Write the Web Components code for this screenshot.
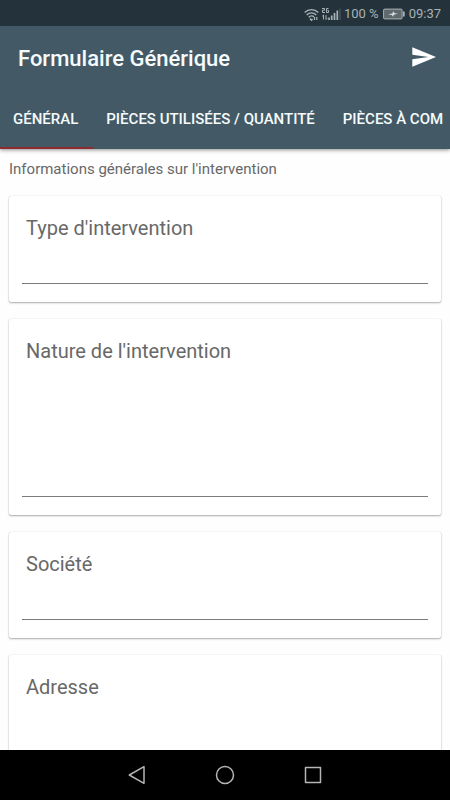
<!DOCTYPE html>
<html lang="fr">
<head>
<meta charset="utf-8">
<meta name="viewport" content="width=device-width, initial-scale=1">
<title>Formulaire Générique</title>
<style>
  html, body { margin: 0; height: 100%; }
  body { font-family: Roboto, "Liberation Sans", sans-serif; background: #fefefe; color: #686868; }
</style>
</head>
<body>
<form-screen>
  <status-bar slot="top" battery="100 %" time="09:37"></status-bar>
  <app-bar slot="top" heading="Formulaire Générique">
    <tab-item selected>GÉNÉRAL</tab-item>
    <tab-item>PIÈCES UTILISÉES / QUANTITÉ</tab-item>
    <tab-item>PIÈCES À COM</tab-item>
  </app-bar>
  <form-section heading="Informations générales sur l'intervention">
    <field-card label="Type d'intervention"></field-card>
    <field-card label="Nature de l'intervention" multiline></field-card>
    <field-card label="Société"></field-card>
    <field-card label="Adresse" multiline></field-card>
  </form-section>
  <nav-bar slot="bottom"></nav-bar>
</form-screen>

<script>
class BaseElement extends HTMLElement {
  connectedCallback() {
    if (this.shadowRoot) return;
    this.attachShadow({ mode: "open" }).innerHTML = this.render();
  }
}

customElements.define("form-screen", class extends BaseElement {
  render() {
    return `<style>
      :host { display: flex; flex-direction: column; height: 100vh; overflow: hidden; }
      header { flex: none; position: relative; z-index: 1; box-shadow: 0 1px 4px rgba(0,0,0,.45); }
      main { flex: 1; min-height: 0; overflow: hidden; }
      footer { flex: none; }
    </style>
    <header><slot name="top"></slot></header>
    <main><slot></slot></main>
    <footer><slot name="bottom"></slot></footer>`;
  }
});

customElements.define("status-bar", class extends BaseElement {
  render() {
    return `<style>
      :host { display: flex; justify-content: flex-end; align-items: center; height: 26px; padding: 2px 9px 0 0;
        box-sizing: border-box; background: #24333b; color: #a9b2b6; font-size: 13px; line-height: 24px; white-space: nowrap; }
      svg { display: block; flex: none; }
      .signal { margin: 0 3px 0 3px; }
      .battery { margin: 0 4px; }
    </style>
    <svg width="15" height="13" viewBox="0 0 15 13" fill="none" stroke="#a9b2b6" stroke-width="1.4" aria-hidden="true">
      <path d="M.7 4.5C4.500.6 10.500.6 14.300 4.500M2.700 7C5.500 4.200 9.500 4.200 12.300 7M4.700 9.300C6.300 7.700 8.700 7.700 10 9"/>
      <path d="M6 10.500 7.500 12.300 8.500 11" />
      <path d="M10.500 9v3M12.800 9v3" stroke-width="1.200"/>
    </svg>
    <svg class="signal" width="19" height="14" viewBox="0 0 19 14" fill="none" stroke="#a9b2b6" aria-hidden="true">
      <path d="M0 1.500h2.500v1.700H.5V5.500H3M6.500 1.500h-2v4h2v-2H5.500" stroke-width="1"/>
      <path d="M1.500 8v4.500M.3 9.200 1.500 8M4 8v4.500M4 12.500 5.200 11.300" stroke-width="1"/>
      <path d="M7 13v-2.500M9.700 13V8.500M12.500 13V6M15.300 13V3.500" stroke-width="1.700"/>
      <path d="M18 13V1.500" stroke="#4c5a61" stroke-width="1.200"/>
    </svg>
    <span>${this.getAttribute("battery")}</span>
    <svg class="battery" width="22" height="12" viewBox="0 0 22 12" aria-hidden="true">
      <rect x=".6" y="1.100" width="18.500" height="9.800" rx="1" fill="#5e696e" stroke="#a9b2b6"/>
      <path d="M20 3.500h1.700v5H20z" fill="#a9b2b6"/>
      <path d="M5 6.200 9.500 5.500 10 3.200 11.800 5.200 15 5.700 10.800 6.800 10 8.800 8.800 6.900z" fill="#d8dddf"/>
    </svg>
    <time>${this.getAttribute("time")}</time>`;
  }
});

customElements.define("app-bar", class extends BaseElement {
  render() {
    return `<style>
      :host { display: block; background: #435a66; color: #f5fbfc; }
      .title { display: flex; align-items: center; justify-content: space-between; height: 62px; padding: 0 14px 0 18px; }
      h1 { margin: 0; padding-top: 4px; font-size: 22px; line-height: 28px; font-weight: 500; white-space: nowrap; }
      button { display: flex; padding: 0; border: 0; background: none; color: #fff; }
      .tabs { display: flex; height: 61px; overflow: hidden; }
    </style>
    <div class="title">
      <h1>${this.getAttribute("heading")}</h1>
      <button type="button" aria-label="Envoyer">
        <svg width="24" height="20" viewBox="0 0 24 20"><path fill="currentColor" d="M.3.2 24 10 .3 19.800V12.300L16.500 10 .3 7.700z"/></svg>
      </button>
    </div>
    <div class="tabs" role="tablist"><slot></slot></div>`;
  }
});

customElements.define("tab-item", class extends BaseElement {
  render() {
    const selected = this.hasAttribute("selected");
    return `<style>
      :host { display: flex; flex: none; }
      button { font: 500 15px/20px Roboto, "Liberation Sans", sans-serif; color: inherit; background: none; border: 0;
        border-bottom: 2px solid transparent; padding: 2px 15px 0 13px; margin: 0; white-space: nowrap; }
      button[aria-selected="true"] { border-bottom-color: #8c2c30; }
    </style>
    <button type="button" role="tab" aria-selected="${selected}"><slot></slot></button>`;
  }
});

customElements.define("form-section", class extends BaseElement {
  render() {
    return `<style>
      :host { display: block; padding: 10px 9px; }
      h2 { margin: 0 0 17px; font-size: 15px; line-height: 20px; font-weight: 400; }
      form { display: grid; gap: 17px; }
    </style>
    <h2>${this.getAttribute("heading")}</h2>
    <form><slot></slot></form>`;
  }
});

customElements.define("field-card", class extends BaseElement {
  render() {
    const control = this.hasAttribute("multiline")
      ? `<textarea id="field"></textarea>`
      : `<input id="field" type="text">`;
    return `<style>
      :host { display: block; padding: 20px 13px 18px; background: #fff; border-radius: 2px;
        box-shadow: 0 1px 2px rgba(0,0,0,.32), 0 0 1px rgba(0,0,0,.2); }
      label { display: block; padding-left: 4px; font-size: 20px; line-height: 24px; }
      input, textarea { display: block; box-sizing: border-box; width: 100%; height: 44px; margin: 0; padding: 8px 4px;
        border: 0; border-bottom: 1px solid #7c7c7c; border-radius: 0; background: none; outline: 0; resize: none;
        font: 20px/24px Roboto, "Liberation Sans", sans-serif; color: #333; }
      textarea { height: 134px; }
    </style>
    <label for="field">${this.getAttribute("label")}</label>
    ${control}`;
  }
});

customElements.define("nav-bar", class extends BaseElement {
  render() {
    return `<style>
      :host { display: block; background: #000; }
      nav { display: flex; justify-content: center; align-items: center; gap: 68px; height: 50px; }
      button { display: flex; padding: 0; border: 0; background: none; color: #b5b5b5; }
      svg { fill: none; stroke: currentColor; stroke-width: 1.500; stroke-linejoin: round; }
    </style>
    <nav>
      <button type="button" aria-label="Retour"><svg width="20" height="20" viewBox="0 0 20 20"><path d="M17 1.700v16.600L2.300 10z"/></svg></button>
      <button type="button" aria-label="Accueil"><svg width="20" height="20" viewBox="0 0 20 20"><circle cx="10" cy="10" r="8.500"/></svg></button>
      <button type="button" aria-label="Applications récentes"><svg width="20" height="20" viewBox="0 0 20 20"><path d="M2.500 2.500h15v15h-15z"/></svg></button>
    </nav>`;
  }
});
</script>
</body>
</html>
